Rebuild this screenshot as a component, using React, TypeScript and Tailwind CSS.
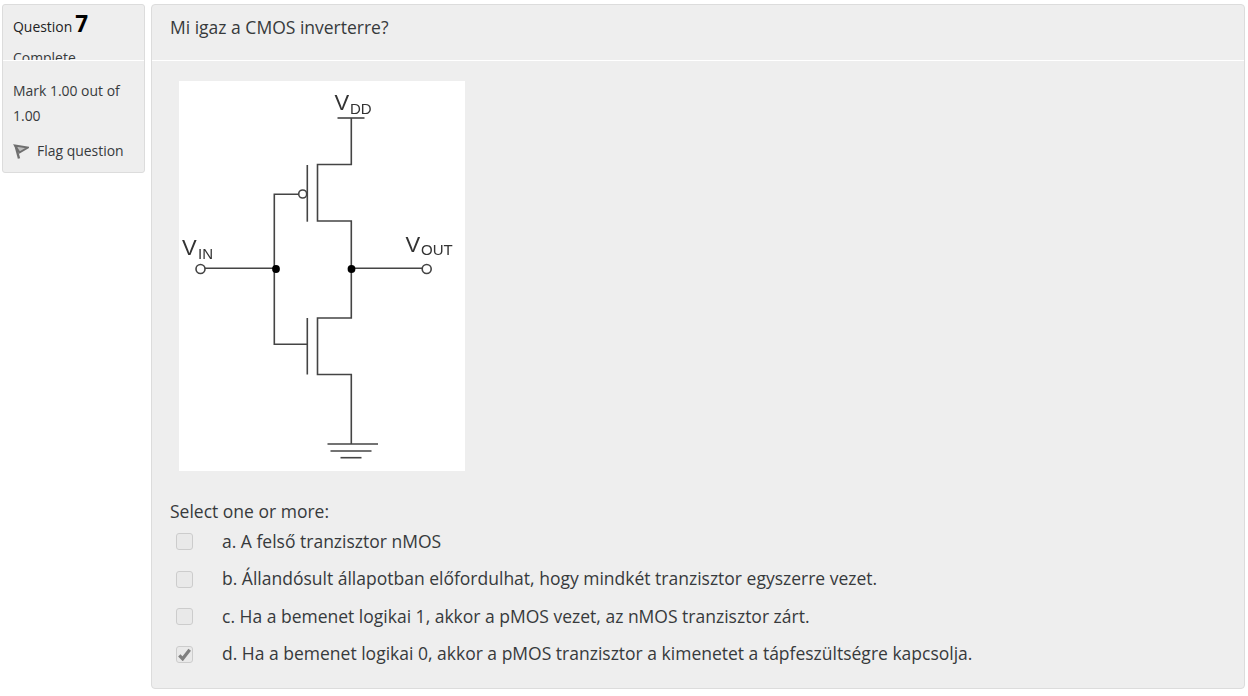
import React from "react";

const options = [
  { text: "a. A felső tranzisztor nMOS", checked: false },
  { text: "b. Állandósult állapotban előfordulhat, hogy mindkét tranzisztor egyszerre vezet.", checked: false },
  { text: "c. Ha a bemenet logikai 1, akkor a pMOS vezet, az nMOS tranzisztor zárt.", checked: false },
  { text: "d. Ha a bemenet logikai 0, akkor a pMOS tranzisztor a kimenetet a tápfeszültségre kapcsolja.", checked: true },
];

// the CMOS inverter figure, viewBox uses page coordinates
const Circuit = () => (
  <svg
    viewBox="179 81 286 390"
    className="block w-[286px] h-[390px] bg-white blur-[0.45px]"
    style={{ fontFamily: '"Liberation Sans", Arial, sans-serif' }}
  >
    <g fill="none" stroke="#444" strokeWidth="1.6">
      <path d="M337.5 118H364.5" />
      <path d="M351.3 118V164.5H317.5V221H351.3V318H317.5V374.5H351.3V444" />
      <path d="M307.3 165V221.7" />
      <path d="M307.3 318V374.5" />
      <path d="M298.5 194.3H274.3V344.3H307.3" />
      <path d="M205 268.3H276" />
      <path d="M351.3 268.3H422" />
      <path d="M327.5 444H378" />
      <path d="M330.5 451H371.5" />
      <path d="M340.5 457.7H361.5" />
      <circle cx="302.7" cy="194" r="4" fill="#fff" />
      <circle cx="200.5" cy="269" r="4.5" fill="#fff" />
      <circle cx="426.7" cy="269" r="4.5" fill="#fff" />
    </g>
    <circle cx="276" cy="269" r="3.9" fill="#000" />
    <circle cx="351.5" cy="269" r="3.9" fill="#000" />
    <g fill="#333">
      <text x="334.5" y="110" fontSize="22">V</text>
      <text x="350" y="114" fontSize="15">DD</text>
      <text x="182" y="255" fontSize="22">V</text>
      <text x="198" y="258.5" fontSize="15">IN</text>
      <text x="405.5" y="251.5" fontSize="22">V</text>
      <text x="421" y="255" fontSize="15">OUT</text>
    </g>
  </svg>
);

const Checkbox = ({ checked }: { checked: boolean }) => (
  <span className="flex items-center justify-center mt-[2px] w-[17px] h-[17px] rounded-[3px] border border-[#ccc] bg-[#e9e9e9]">
    {checked && (
      <svg viewBox="0 0 12 12" className="w-[13px] h-[13px] blur-[0.3px]">
        <path d="M1.2 6.8L4.3 10L10.8 1.6" fill="none" stroke="#808080" strokeWidth="3" />
      </svg>
    )}
  </span>
);

const FlagIcon = () => (
  <svg viewBox="0 0 16 16" className="w-[16px] h-[18px] blur-[0.4px]">
    <path d="M2 2.5L15 4.5L6.5 9.5Z" fill="#bdbdbd" stroke="#6f6f6f" strokeWidth="2" />
    <path d="M2.5 2.5L6 15.5" fill="none" stroke="#6f6f6f" strokeWidth="2.4" />
  </svg>
);

export default function App() {
  return (
    <div
      className="w-[1248px] h-[696px] overflow-hidden bg-white flex items-start gap-[6px] pt-[4px] pl-[2px] text-[#373a3c]"
      style={{ fontFamily: '"Open Sans", sans-serif' }}
    >
      {/* sidebar */}
      <div className="w-[143px] h-[169px] shrink-0 rounded-[3px] border border-[#dcdcdc] bg-[#eeeeee] overflow-hidden text-[13.95px] leading-[25px]">
        <div className="h-[55px] overflow-hidden px-[10px] pt-[6px]">
          <div className="flex items-baseline h-[30px] text-[#222]">
            Question<span className="ml-[3px] text-[22.5px] font-bold text-black">7</span>
          </div>
          <div className="mt-[4px]">Complete</div>
        </div>
        <div className="h-px bg-white" />
        <div className="px-[10px] pt-[17px]">
          <div>Mark 1.00 out of</div>
          <div>1.00</div>
          <div className="flex items-center mt-[10px]">
            <FlagIcon />
            <span className="ml-[8px]">Flag question</span>
          </div>
        </div>
      </div>

      {/* question card */}
      <div className="w-[1094px] h-[685px] shrink-0 rounded-[4px] border border-[#dcdcdc] bg-[#eeeeee] overflow-hidden text-[17.5px]">
        <div className="h-[55px] px-[18px] pt-[9px] leading-[27px]">Mi igaz a CMOS inverterre?</div>
        <div className="h-px bg-white" />
        <div className="pl-[27px] pt-[20px]">
          <Circuit />
        </div>
        <div className="pl-[18px] pt-[27px] leading-[26px]">Select one or more:</div>
        <div className="pl-[24px] -mt-[2px]">
          {options.map((o) => (
            <div key={o.text} className="flex items-center h-[37.5px]">
              <Checkbox checked={o.checked} />
              <span className="ml-[29px]">{o.text}</span>
            </div>
          ))}
        </div>
      </div>
    </div>
  );
}
